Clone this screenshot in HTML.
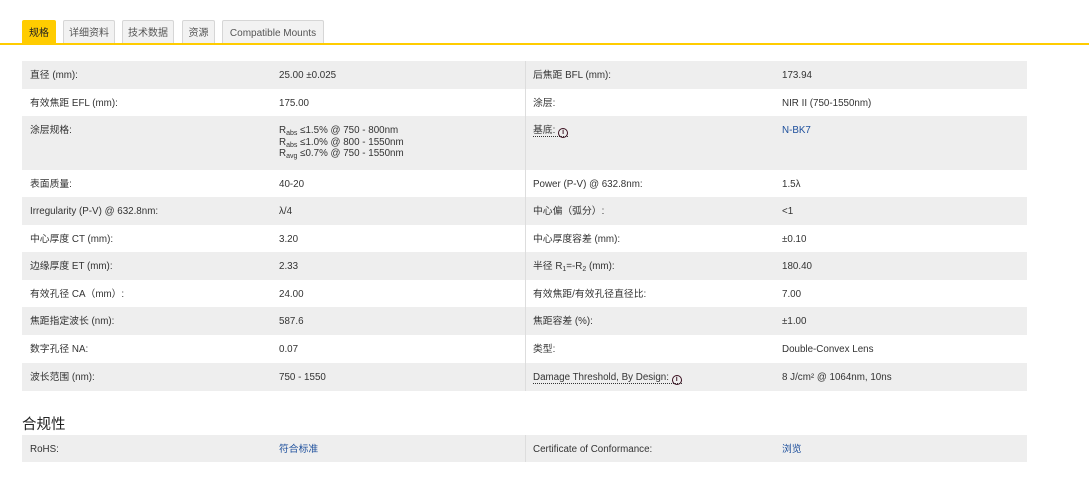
<!DOCTYPE html>
<html><head><meta charset="utf-8"><style>
body{margin:0;width:1089px;height:493px;background:#fff;font-family:"Liberation Sans","Noto Sans CJK SC",sans-serif;color:#333;position:relative;overflow:hidden}
.tab{position:absolute;top:20px;height:24px;box-sizing:border-box;border:1px solid #d6d6d6;border-bottom:none;background:#f2f2f2;font-size:10px;color:#555;line-height:25px;text-align:center;border-radius:2px 2px 0 0;white-space:nowrap}
.tab.a{background:#ffcc00;border-color:#ffcc00;color:#222}
.line{position:absolute;top:43px;left:0;width:1089px;height:2px;background:#ffcc00}
.row{position:absolute;left:22px;width:1005px;box-sizing:border-box;font-size:9.8px;line-height:11.5px}
.g{background:#eee}
.row span{position:absolute;top:9px;white-space:nowrap}
.c1{left:8px}.c2{left:257px}.c3{left:511px}.c4{left:760px}
.div{position:absolute;left:503px;top:0;bottom:0;width:1px;background:#ddd}
a{color:#1d4f9c;text-decoration:none}
.dot{border-bottom:1px dotted #333}
.i{display:inline-block;width:8px;height:8px;border:1.5px solid #3a1020;border-radius:50%;font-size:7px;line-height:8px;text-align:center;font-weight:bold;color:#3a1020;vertical-align:-1px;box-sizing:content-box}
sub{font-size:7px;vertical-align:-2px;line-height:0}
h3{position:absolute;left:22px;top:413px;margin:0;font-size:14.5px;font-weight:normal;color:#222}
</style></head><body>
<div class="tab a" style="left:22px;width:34px">规格</div>
<div class="tab" style="left:63px;width:52px">详细资料</div>
<div class="tab" style="left:122px;width:52px">技术数据</div>
<div class="tab" style="left:182px;width:33px">资源</div>
<div class="tab" style="left:222px;width:102px">Compatible Mounts</div>
<div class="line"></div>

<div class="row g" style="top:61px;height:28px"><div class="div"></div><span class="c1">直径 (mm):</span><span class="c2">25.00 ±0.025</span><span class="c3">后焦距 BFL (mm):</span><span class="c4">173.94</span></div>
<div class="row" style="top:89px;height:27px"><div class="div"></div><span class="c1">有效焦距 EFL (mm):</span><span class="c2">175.00</span><span class="c3">涂层:</span><span class="c4">NIR II (750-1550nm)</span></div>
<div class="row g" style="top:116px;height:54px"><div class="div"></div><span class="c1">涂层规格:</span><span class="c2">R<sub>abs</sub> ≤1.5% @ 750 - 800nm<br>R<sub>abs</sub> ≤1.0% @ 800 - 1550nm<br>R<sub>avg</sub> ≤0.7% @ 750 - 1550nm</span><span class="c3"><span class="dot" style="position:static">基底: <b class="i">i</b></span></span><span class="c4"><a>N-BK7</a></span></div>
<div class="row" style="top:170px;height:27px"><div class="div"></div><span class="c1">表面质量:</span><span class="c2">40-20</span><span class="c3">Power (P-V) @ 632.8nm:</span><span class="c4">1.5λ</span></div>
<div class="row g" style="top:197px;height:28px"><div class="div"></div><span class="c1">Irregularity (P-V) @ 632.8nm:</span><span class="c2">λ/4</span><span class="c3">中心偏（弧分）:</span><span class="c4">&lt;1</span></div>
<div class="row" style="top:225px;height:27px"><div class="div"></div><span class="c1">中心厚度 CT (mm):</span><span class="c2">3.20</span><span class="c3">中心厚度容差 (mm):</span><span class="c4">±0.10</span></div>
<div class="row g" style="top:252px;height:28px"><div class="div"></div><span class="c1">边缘厚度 ET (mm):</span><span class="c2">2.33</span><span class="c3">半径 R<sub>1</sub>=-R<sub>2</sub> (mm):</span><span class="c4">180.40</span></div>
<div class="row" style="top:280px;height:27px"><div class="div"></div><span class="c1">有效孔径 CA（mm）:</span><span class="c2">24.00</span><span class="c3">有效焦距/有效孔径直径比:</span><span class="c4">7.00</span></div>
<div class="row g" style="top:307px;height:28px"><div class="div"></div><span class="c1">焦距指定波长 (nm):</span><span class="c2">587.6</span><span class="c3">焦距容差 (%):</span><span class="c4">±1.00</span></div>
<div class="row" style="top:335px;height:28px"><div class="div"></div><span class="c1">数字孔径 NA:</span><span class="c2">0.07</span><span class="c3">类型:</span><span class="c4">Double-Convex Lens</span></div>
<div class="row g" style="top:363px;height:28px"><div class="div"></div><span class="c1">波长范围 (nm):</span><span class="c2">750 - 1550</span><span class="c3"><span class="dot" style="position:static">Damage Threshold, By Design: <b class="i">i</b></span></span><span class="c4">8 J/cm² @ 1064nm, 10ns</span></div>

<h3>合规性</h3>
<div class="row g" style="top:435px;height:27px"><div class="div"></div><span class="c1">RoHS:</span><span class="c2"><a>符合标准</a></span><span class="c3">Certificate of Conformance:</span><span class="c4"><a>浏览</a></span></div>
</body></html>
